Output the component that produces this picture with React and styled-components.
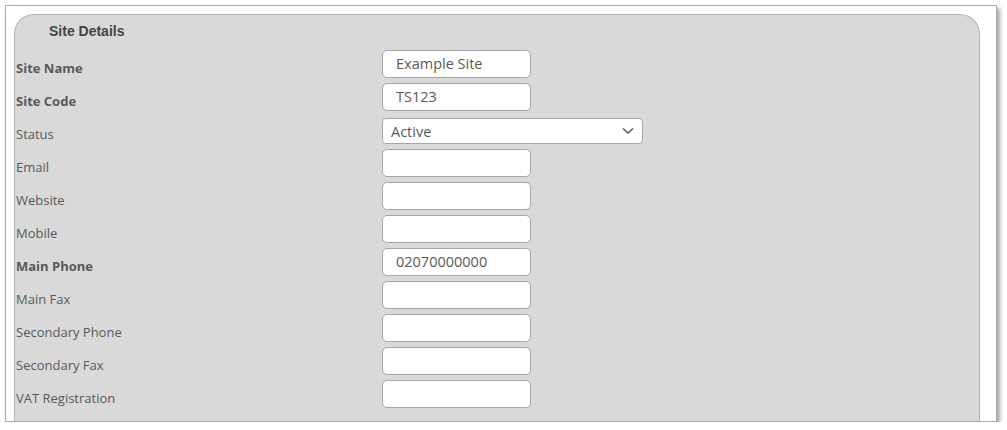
import React from 'react';
import styled, { createGlobalStyle } from 'styled-components';

const GlobalStyle = createGlobalStyle`
    html, body {
        margin: 0;
        padding: 0;
        background: #ffffff;
    }
`;

const Frame = styled.div`
    box-sizing: border-box;
    margin: 5px 0 0 5px;
    width: 992px;
    height: 417px;
    padding: 8px 16px 0 8px;
    border: 1px solid #a9a9a9;
    background: #ffffff;
    box-shadow: 3px 3px 4px rgba(0, 0, 0, 0.35);
    overflow: hidden;
`;

const Panel = styled.div`
    box-sizing: border-box;
    width: 966px;
    min-height: 440px;
    background: #d9d9d9;
    border: 1px solid #b3b3b3;
    border-bottom: none;
    border-radius: 20px 20px 0 0;
`;

const PanelTitle = styled.h6`
    margin: 0;
    height: 34px;
    padding: 8px 0 0 34px;
    box-sizing: border-box;
    font-family: "Liberation Sans", Arial, sans-serif;
    font-size: 14px;
    line-height: 16px;
    font-weight: bold;
    color: #444444;
`;

const Row = styled.div`
    display: grid;
    grid-template-columns: 366px 1fr;
    height: 33px;
    padding-left: 1px;
`;

const Label = styled.div`
    padding-top: 10px;
    font-family: "Open Sans", sans-serif;
    font-size: 13px;
    line-height: 18px;
    font-weight: ${p => (p.$bold ? 700 : 400)};
    color: #595959;
`;

const Input = styled.div`
    box-sizing: border-box;
    margin-top: 1px;
    width: 149px;
    height: 28px;
    padding: 0 13px;
    background: #ffffff;
    border: 1px solid #a6a6a6;
    border-radius: 5px;
    font-family: "Open Sans", sans-serif;
    font-size: 14.5px;
    line-height: 25px;
    color: #595959;
`;

const Select = styled.div`
    box-sizing: border-box;
    margin-top: 3px;
    width: 261px;
    height: 26px;
    padding: 0 8px;
    display: flex;
    align-items: center;
    justify-content: space-between;
    background: #ffffff;
    border: 1px solid #a6a6a6;
    border-radius: 4px;
    font-family: "Open Sans", sans-serif;
    font-size: 14.5px;
    color: #595959;
`;

const Chevron = () => (
    <svg width="12" height="8" viewBox="0 0 12 8">
        <polyline points="1,1.5 6,6 11,1.5" fill="none" stroke="#555" strokeWidth="1.6" />
    </svg>
);

const fields = [
    { label: 'Site Name', bold: true, value: 'Example Site' },
    { label: 'Site Code', bold: true, value: 'TS123' },
    { label: 'Status', select: true, value: 'Active' },
    { label: 'Email' },
    { label: 'Website' },
    { label: 'Mobile' },
    { label: 'Main Phone', bold: true, value: '02070000000' },
    { label: 'Main Fax' },
    { label: 'Secondary Phone' },
    { label: 'Secondary Fax' },
    { label: 'VAT Registration' }
];

const App = () => (
    <>
        <GlobalStyle />
        <Frame>
            <Panel>
                <PanelTitle>Site Details</PanelTitle>
                {fields.map(f => (
                    <Row key={f.label}>
                        <Label $bold={f.bold}>{f.label}</Label>
                        <div>
                            {f.select ? (
                                <Select>
                                    <span>{f.value}</span>
                                    <Chevron />
                                </Select>
                            ) : (
                                <Input>{f.value}</Input>
                            )}
                        </div>
                    </Row>
                ))}
            </Panel>
        </Frame>
    </>
);

export default App;
